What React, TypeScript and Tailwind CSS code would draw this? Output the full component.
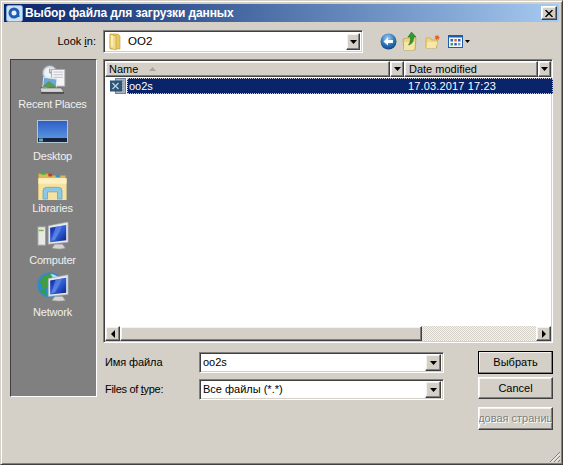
import React from "react";

const raised = "border border-t-white border-l-white border-r-[#404040] border-b-[#404040] bg-[#d4d0c8] shadow-[inset_-1px_-1px_0_#808080,inset_1px_1px_0_#f4f2ee]";
const sunken = "border border-t-[#808080] border-l-[#808080] border-r-white border-b-white shadow-[inset_1px_1px_0_#404040,inset_-1px_-1px_0_#d4d0c8]";

function Tri({ dir = "down" }: { dir?: "down" | "left" | "right" }) {
  const pts = dir === "down" ? "0,0 7,0 3.5,4" : dir === "left" ? "4,0 4,8 0,4" : "0,0 0,8 4,4";
  return (
    <svg width={dir === "down" ? 7 : 4} height={dir === "down" ? 4 : 8} viewBox={dir === "down" ? "0 0 7 4" : "0 0 4 8"}>
      <polygon points={pts} fill="#000" />
    </svg>
  );
}

function Combo({ children, className, btn }: { children: React.ReactNode; className: string; btn: string }) {
  return (
    <div className={`${sunken} bg-white flex items-center pl-[3px] pr-[2px] ${className}`}>
      <div className="flex-1 min-w-0 flex items-center text-black truncate">{children}</div>
      <div className={`${raised} ${btn} flex items-center justify-center shrink-0`}>
        <Tri />
      </div>
    </div>
  );
}

function Folder() {
  return (
    <svg width="16" height="19" viewBox="0 0 16 19">
      <path d="M3 2h8l2 2v13H3z" fill="#e8c860" stroke="#b89a40" strokeWidth="0.6" />
      <path d="M3 2l6 2v14l-6-2z" fill="#f4dc84" stroke="#b89a40" strokeWidth="0.6" />
      <path d="M4 3l2 .8v11l-2-.8z" fill="#fbeeb4" />
    </svg>
  );
}

function BackIcon() {
  return (
    <svg width="17" height="17" viewBox="0 0 17 17">
      <defs>
        <radialGradient id="bk" cx="45%" cy="30%" r="75%">
          <stop offset="0" stopColor="#a9d2f2" />
          <stop offset="0.55" stopColor="#2e79bd" />
          <stop offset="1" stopColor="#0d3f7c" />
        </radialGradient>
      </defs>
      <circle cx="8.5" cy="8.5" r="8" fill="url(#bk)" />
      <path d="M3.5 8.5L8 4.5v2.5h5v3H8v2.500z" fill="#fff" />
    </svg>
  );
}

function UpIcon() {
  return (
    <svg width="16" height="20" viewBox="0 0 16 20">
      <path d="M1 7l4-1h9l-1 12H2z" fill="#ecd484" stroke="#b89a40" strokeWidth="0.7" />
      <path d="M2 10h11l-1 8H2z" fill="#f6e6a6" />
      <path d="M9.500 0l4.500 5h-2.500c0 5-1.500 7-5 8 1.500-2 2-4 2-8H6z" fill="#2f9b2f" stroke="#186a18" strokeWidth="0.5" />
    </svg>
  );
}

function NewFolderIcon() {
  return (
    <svg width="16" height="15" viewBox="0 0 16 15">
      <path d="M1 4l4 0 1.500 2h6l-1 8H1z" fill="#f0d880" stroke="#c0a448" strokeWidth="0.7" />
      <path d="M2.500 8h10l-2 6H1.500z" fill="#f8e8a8" />
      <path d="M12 0.500l.6 1.500 1.500-.8-.6 1.800 1.800.5-1.700.8.6 1.600-1.700-.8-1 1.400-.4-1.800-1.800-.2 1.300-1.200-1-1.500 1.800.3z" fill="#e86020" />
    </svg>
  );
}

function ViewIcon() {
  return (
    <div className="flex items-center gap-[2px]">
      <svg width="15" height="13" viewBox="0 0 15 13">
        <rect x="0.500" y="0.500" width="14" height="12" fill="#f4f8fc" stroke="#1c5ca8" />
        <rect x="0.500" y="0.500" width="14" height="2" fill="#1c5ca8" />
        <rect x="2.500" y="4" width="2.500" height="2.500" fill="#3060c0" />
        <rect x="6.300" y="4" width="2.500" height="2.500" fill="#d06a30" />
        <rect x="10" y="4" width="2.500" height="2.500" fill="#3060c0" />
        <rect x="2.500" y="8" width="2.500" height="2.500" fill="#40a050" />
        <rect x="6.300" y="8" width="2.500" height="2.500" fill="#3060c0" />
        <rect x="10" y="8" width="2.500" height="2.500" fill="#80a0d0" />
      </svg>
      <svg width="5" height="3" viewBox="0 0 5 3"><polygon points="0,0 5,0 2.500,3" fill="#000" /></svg>
    </div>
  );
}

function AppIcon() {
  return (
    <svg width="17" height="17" viewBox="0 0 17 17">
      <rect x="0.500" y="0.500" width="16" height="16" rx="2" fill="#cfe0f4" stroke="#7aa4d4" />
      <circle cx="8" cy="8" r="5.500" fill="#1d5fb4" />
      <circle cx="8" cy="8" r="2.500" fill="#eaf2fb" />
      <rect x="9.500" y="10" width="4" height="2" fill="#1d5fb4" />
    </svg>
  );
}

function FileIcon() {
  return (
    <svg width="16" height="16" viewBox="0 0 16 16">
      <rect x="5.500" y="0.500" width="10" height="15" fill="#a8b6c4" stroke="#71849a" />
      <path d="M11 3h3M11 6h3M11 9h3M11 12h3" stroke="#7c8ea4" />
      <rect x="0" y="2.500" width="12" height="11" fill="#2e5478" />
      <path d="M2.500 5l6 6M8.500 5l-6 6" stroke="#bcd4e4" strokeWidth="1.300" />
    </svg>
  );
}

function Recent() {
  return (
    <svg width="31" height="30" viewBox="0 0 34 34">
      <circle cx="14" cy="9" r="8.500" fill="#c8d2da" stroke="#8c98a2" />
      <circle cx="14" cy="9" r="6.500" fill="#eef3f6" />
      <path d="M14 4v5h4" stroke="#6c7680" fill="none" />
      <rect x="16" y="5" width="15" height="19" fill="#f5f5f5" stroke="#a6a6a6" />
      <path d="M18 8h11M18 11h11M18 14h11" stroke="#b8b8c6" />
      <path d="M7 14l15 2-1 11-15-2z" fill="#6ea6d8" stroke="#e8eef4" />
      <path d="M7 23l6-5 8 6-1 3-14-2z" fill="#5a9a58" />
      <path d="M3 26l24 0 3 5H4z" fill="#d6d6d6" stroke="#555" strokeWidth="0.7" />
      <path d="M4 31h26v1.500H4z" fill="#3e3e3e" />
    </svg>
  );
}

function Desktop() {
  return (
    <svg width="31" height="23" viewBox="0 0 31 23">
      <defs>
        <linearGradient id="dk" x1="0" y1="0" x2="0" y2="1">
          <stop offset="0" stopColor="#2e5cc6" />
          <stop offset="1" stopColor="#62a0e4" />
        </linearGradient>
      </defs>
      <rect x="0.500" y="0.500" width="30" height="22" fill="url(#dk)" stroke="#b8c4d0" />
      <rect x="1" y="18" width="29" height="4" fill="#16253e" />
      <rect x="2" y="18.500" width="4" height="3" fill="#58a8b0" />
    </svg>
  );
}

function Libraries() {
  return (
    <svg width="31" height="29" viewBox="0 0 33 32">
      <path d="M1 3h10l2 2h18v26H1z" fill="#d8b858" stroke="#b89a40" strokeWidth="0.6" />
      <rect x="4" y="1" width="5" height="3" fill="#4aa84a" />
      <rect x="12" y="3" width="4" height="3" fill="#c83a28" />
      <rect x="20" y="4" width="5" height="3" fill="#3a90c8" />
      <path d="M1 8h31v24H1z" fill="#f6e29c" />
      <path d="M1 8h31v6H1z" fill="#fbf0c4" />
      <path d="M6 31v-9q0-4 4-4h13q4 0 4 4v9h-5v-8h-11v8z" fill="#8cc8e4" stroke="#4f9cc4" strokeWidth="0.7" />
    </svg>
  );
}

function Computer({ globe }: { globe?: boolean }) {
  return (
    <svg width={32} height={globe ? 31 : 28} viewBox={globe ? "0 0 34 33" : "0 3 34 29"} preserveAspectRatio="none">
      <defs>
        <linearGradient id={globe ? "cg" : "cc"} x1="0" y1="0" x2="1" y2="1">
          <stop offset="0" stopColor="#0a1e9c" />
          <stop offset="0.5" stopColor="#2f62dc" />
          <stop offset="1" stopColor="#0c1e80" />
        </linearGradient>
      </defs>
      {globe ? (
        <>
          <circle cx="14" cy="14" r="13.500" fill="#2b8ad0" />
          <path d="M3 10q4-8 12-8l3 4-5 4-2 7-5 1z" fill="#3f9e3f" />
          <path d="M3 18l5 1 3 6q-6-1-8-7z" fill="#3a9a4a" />
          <path d="M14 2q5 0 9 4l-5 1z" fill="#b8e0f0" />
        </>
      ) : (
        <>
          <rect x="1" y="8" width="8" height="19" fill="#e8e8e4" stroke="#a0a0a0" />
          <rect x="2" y="11" width="5" height="1.500" fill="#72b848" />
        </>
      )}
      <path d="M12 7l21 -4v21l-21 2z" fill="#e6e8ec" stroke="#a4a8ae" strokeWidth="0.7" />
      <path d="M14 9l17-3v16l-17 2z" fill={`url(#${globe ? "cg" : "cc"})`} />
      <path d="M20 8l7-1-8 15-4 .5z" fill="#8db0f0" opacity="0.45" />
      <path d="M19 26h8l3 4q-6 2-14 0z" fill="#d4d4d2" stroke="#a0a0a0" strokeWidth="0.6" />
    </svg>
  );
}

function Place({ icon, label, box }: { icon: React.ReactNode; label: string; box: string }) {
  return (
    <div className={`flex flex-col items-center justify-end ${box}`}>
      {icon}
      <div className="text-[#f0f0f0] text-[11px] leading-[13px] tracking-[-0.2px] whitespace-nowrap">{label}</div>
    </div>
  );
}

export default function App() {
  return (
    <div className="w-[563px] h-[465px] overflow-hidden relative bg-[#d4d0c8] text-black border border-t-[#d4d0c8] border-l-[#d4d0c8] border-r-[#404040] border-b-[#404040] shadow-[inset_1px_1px_0_#fff,inset_-1px_-1px_0_#808080] p-[3px] text-[11px] [font-family:'Liberation_Sans',Arial,sans-serif]">
      <div className="h-[18px] flex items-center bg-gradient-to-r from-[#0a246a] to-[#a6caf0] pl-[2px] pr-[2px] gap-[2px]">
        <AppIcon />
        <div className="flex-1 text-white font-bold text-[12px] tracking-[-0.1px] whitespace-nowrap">Выбор файла для загрузки данных</div>
        <div className={`${raised} w-[16px] h-[14px] flex items-center justify-center`}>
          <svg width="8" height="7" viewBox="0 0 8 7"><path d="M0.500 0l7 7M7.500 0l-7 7" stroke="#000" strokeWidth="1.400" /></svg>
        </div>
      </div>

      <div className="flex items-center h-[23px] mt-[8px] pl-[6px]">
        <div className="w-[86px] text-right text-[11px]">Look <span className="underline">i</span>n:</div>
        <Combo className="w-[260px] h-[23px] ml-[7px] text-[11.500px]" btn="w-[14px] h-[17px]">
          <span className="flex items-center gap-[4px]"><Folder /><span className="ml-[1px]">OO2</span></span>
        </Combo>
        <div className="flex items-center ml-[17px] w-[100px]">
          <BackIcon />
          <div className="ml-[5px]"><UpIcon /></div>
          <div className="ml-[7px]"><NewFolderIcon /></div>
          <div className="ml-[7px]"><ViewIcon /></div>
        </div>
      </div>

      <div className="flex mt-[6px] pl-[6px] gap-[6px]">
        <div className="w-[87px] h-[338px] bg-[#808080] border border-t-[#404040] border-l-[#404040] border-r-white border-b-white pt-[5px] pr-[2px] flex flex-col shrink-0">
          <Place icon={<Recent />} label="Recent Places" box="h-[46px] gap-[3px]" />
          <Place icon={<Desktop />} label="Desktop" box="h-[52px] gap-[7px]" />
          <Place icon={<Libraries />} label="Libraries" box="h-[52px] gap-[2px]" />
          <Place icon={<Computer />} label="Computer" box="h-[52px] gap-[4px]" />
          <Place icon={<Computer globe />} label="Network" box="h-[52px] gap-[3px]" />
        </div>

        <div className="flex flex-col w-[450px]">
          <div className={`${sunken} bg-white h-[284px] flex flex-col`}>
            <div className="h-[16px] flex mx-[1px] mt-[1px] leading-[14px] bg-[#d4d0c8] shrink-0">
              <div className={`${raised} w-[285px] pl-[3px] flex items-center`}>
                <span>Name</span>
                <svg className="ml-[11px]" width="7" height="4" viewBox="0 0 7 4"><polygon points="3.500,0 7,4 0,4" fill="#a8a49c" /></svg>
              </div>
              <div className={`${raised} w-[14px] flex items-center justify-center`}><Tri /></div>
              <div className={`${raised} w-[134px] pl-[4px] flex items-center`}>Date modified</div>
              <div className={`${raised} w-[13px] flex items-center justify-center`}><Tri /></div>
            </div>
            <div className="flex-1 min-h-0 pt-px">
              <div className="h-[16px] flex items-center -mr-px">
                <div className="w-[23px] pl-[6px] shrink-0 flex items-center"><FileIcon /></div>
                <div className="flex-1 h-full bg-[#0a246a] border border-dotted border-[#c4c8d8] text-white flex items-center">
                  <div className="w-[280px] pl-[1px]">oo2s</div>
                  <div className="tracking-[0.15px]">17.03.2017 17:23</div>
                </div>
              </div>
            </div>
            <div className="h-[15px] mx-[1px] mb-[1px] flex shrink-0 bg-[repeating-conic-gradient(#d4d0c8_0_25%,#f4f4f0_0_50%)] bg-[length:2px_2px]">
              <div className={`${raised} w-[15px] flex items-center justify-center`}><Tri dir="left" /></div>
              <div className={`${raised} w-[302px]`} />
              <div className="flex-1" />
              <div className={`${raised} w-[15px] flex items-center justify-center`}><Tri dir="right" /></div>
            </div>
          </div>

          <div className="flex mt-[8px]">
            <div className="flex flex-col w-[343px] pt-px">
              <div className="flex items-center h-[21px]">
                <div className="w-[96px] pl-[2px] tracking-[-0.1px]">Имя файла</div>
                <Combo className="w-[245px] h-[21px]" btn="w-[16px] h-[17px]">oo2s</Combo>
              </div>
              <div className="flex items-center h-[21px] mt-[6px]">
                <div className="w-[96px] pl-[2px] tracking-[-0.3px]">Files of <span className="underline">t</span>ype:</div>
                <Combo className="w-[245px] h-[21px]" btn="w-[16px] h-[17px]">Все файлы (*.*)</Combo>
              </div>
            </div>
            <div className="flex flex-col ml-[32px] w-[75px]">
              <div className="outline outline-1 outline-black -outline-offset-1 h-[23px]">
                <div className={`${raised} h-full flex items-center justify-center`}>Выбрать</div>
              </div>
              <div className={`${raised} h-[22px] mt-[3px] flex items-center justify-center`}>Cancel</div>
              <div className={`${raised} h-[23px] mt-[8px] flex items-center justify-center overflow-hidden whitespace-nowrap text-[#808080] [text-shadow:1px_1px_0_#fff]`}>довая страниц</div>
            </div>
          </div>
        </div>
      </div>

      <svg className="absolute right-[1px] bottom-[1px]" width="12" height="12" viewBox="0 0 12 12">
        <path d="M11 1L1 11M11 5L5 11M11 9L9 11" stroke="#808080" />
        <path d="M11 2.500L2.500 11M11 6.500L6.500 11" stroke="#fff" />
      </svg>
    </div>
  );
}
